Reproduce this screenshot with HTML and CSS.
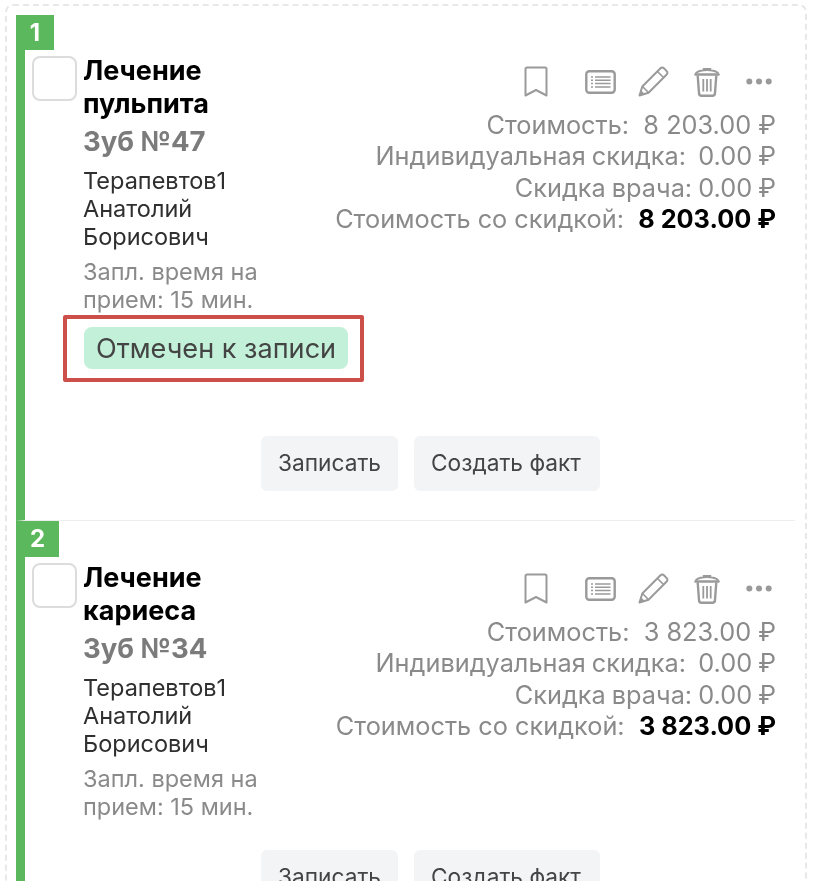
FILE: index.html
```html
<!DOCTYPE html>
<html lang="ru">
<head>
    <meta charset="UTF-8">
    <title>Услуги</title>
    <link rel="stylesheet" href="styles.css">
</head>
<body>
<svg class="sprite" xmlns="http://www.w3.org/2000/svg">
    <symbol id="i-bookmark" viewBox="0 0 24 31">
        <path d="M1.500 3a1.500 1.500 0 0 1 1.500-1.500h18a1.500 1.500 0 0 1 1.500 1.500v26.500l-10.500-5.500-10.500 5.500z" fill="none" stroke="currentColor" stroke-width="2" stroke-linejoin="round"/>
    </symbol>
    <symbol id="i-list" viewBox="0 0 31 24">
        <rect x="1.300" y="1.300" width="28.400" height="21.400" rx="3" fill="none" stroke="currentColor" stroke-width="2.400"/>
        <path d="M10 7h15.500M10 10.300h15.500M10 13.600h15.500M10 17h15.500M6 7h2M6 10.300h2M6 13.600h2M6 17h2" stroke="currentColor" stroke-width="1.500" fill="none"/>
    </symbol>
    <symbol id="i-pencil" viewBox="0 0 31 31">
        <path d="M1.500 29.500l2.800-9L22.500 2.300a2.400 2.400 0 0 1 3.400 0l2.800 2.800a2.400 2.400 0 0 1 0 3.400L10.500 26.700z" fill="none" stroke="currentColor" stroke-width="2" stroke-linejoin="round"/>
        <path d="M19.500 5.500l6 6M4.500 20.500l6 6" fill="none" stroke="currentColor" stroke-width="1.600"/>
        <path d="M1.500 29.500l1.600-5.200 3.600 3.600z" fill="currentColor"/>
    </symbol>
    <symbol id="i-trash" viewBox="0 0 26 30">
        <path d="M1.500 7.500h23" fill="none" stroke="currentColor" stroke-width="2.600" stroke-linecap="round"/>
        <path d="M2 6C5 3.500 9 3 13 3s8 .5 11 3M9.500 2h7" fill="none" stroke="currentColor" stroke-width="1.800" stroke-linecap="round"/>
        <path d="M3.700 8.500l1.300 17.500a2.700 2.700 0 0 0 2.700 2.700h10.600a2.700 2.700 0 0 0 2.700-2.700l1.300-17.500" fill="none" stroke="currentColor" stroke-width="2.400"/>
        <path d="M9.300 12v12.500M13 12v12.500M16.700 12v12.500" fill="none" stroke="currentColor" stroke-width="1.800"/>
    </symbol>
    <symbol id="i-dots" viewBox="0 0 26 7">
        <circle cx="3.300" cy="3.500" r="3" fill="currentColor"/>
        <circle cx="13" cy="3.500" r="3" fill="currentColor"/>
        <circle cx="22.700" cy="3.500" r="3" fill="currentColor"/>
    </symbol>
</svg>

<div class="services">
    <section class="service">
        <div class="num">1</div>
        <div class="service-body">
            <span class="check"></span>
            <div class="info">
                <h3 class="title">Лечение<br>пульпита</h3>
                <div class="tooth">Зуб №47</div>
                <div class="doctor">Терапевтов1<br>Анатолий<br>Борисович</div>
                <div class="duration">Запл. время на<br>прием: 15 мин.</div>
                <div class="status-mark"><span class="status">Отмечен к записи</span></div>
            </div>
            <div class="side">
                <div class="tools">
                    <svg class="ic-bookmark"><use href="#i-bookmark"/></svg>
                    <svg class="ic-list"><use href="#i-list"/></svg>
                    <svg class="ic-pencil"><use href="#i-pencil"/></svg>
                    <svg class="ic-trash"><use href="#i-trash"/></svg>
                    <svg class="ic-dots"><use href="#i-dots"/></svg>
                </div>
                <div class="prices">
                    <div>Стоимость:&nbsp; 8 203.00 ₽</div>
                    <div class="discount">Индивидуальная скидка:&nbsp; 0.00 ₽</div>
                    <div class="discount">Скидка врача: 0.00 ₽</div>
                    <div>Стоимость со скидкой:&nbsp; <b>8 203.00 ₽</b></div>
                </div>
            </div>
        </div>
        <div class="actions">
            <button class="btn">Записать</button>
            <button class="btn">Создать факт</button>
        </div>
    </section>

    <section class="service">
        <div class="num">2</div>
        <div class="service-body">
            <span class="check"></span>
            <div class="info">
                <h3 class="title">Лечение<br>кариеса</h3>
                <div class="tooth">Зуб №34</div>
                <div class="doctor">Терапевтов1<br>Анатолий<br>Борисович</div>
                <div class="duration">Запл. время на<br>прием: 15 мин.</div>
            </div>
            <div class="side">
                <div class="tools">
                    <svg class="ic-bookmark"><use href="#i-bookmark"/></svg>
                    <svg class="ic-list"><use href="#i-list"/></svg>
                    <svg class="ic-pencil"><use href="#i-pencil"/></svg>
                    <svg class="ic-trash"><use href="#i-trash"/></svg>
                    <svg class="ic-dots"><use href="#i-dots"/></svg>
                </div>
                <div class="prices">
                    <div>Стоимость:&nbsp; 3 823.00 ₽</div>
                    <div class="discount">Индивидуальная скидка:&nbsp; 0.00 ₽</div>
                    <div class="discount">Скидка врача: 0.00 ₽</div>
                    <div>Стоимость со скидкой:&nbsp; <b>3 823.00 ₽</b></div>
                </div>
            </div>
        </div>
        <div class="actions actions-second">
            <button class="btn">Записать</button>
            <button class="btn">Создать факт</button>
        </div>
    </section>
</div>
</body>
</html>
```

FILE: styles.css
```css
* {
    margin: 0;
    padding: 0;
    box-sizing: border-box;
}

html, body {
    width: 100%;
    height: 100%;
    overflow: hidden;
    background: white;
}

body {
    font-family: Inter, "Liberation Sans", sans-serif;
    color: #333;
}

.sprite {
    display: none;
}

.services {
    width: 802px;
    height: 877px;
    margin: 4px 0 0 5px;
    padding: 9px 10px 0 9px;
    border: 2px dashed #e8e8e8;
    border-bottom: 0;
    border-radius: 8px 8px 0 0;
    overflow: hidden;
    filter: blur(0.4px);
}

.service {
    border-left: 9px solid #5cb85c;
    height: 505px;
}

.service + .service {
    height: auto;
    border-top: 1px solid #eee;
}

.num {
    width: 38px;
    height: 35px;
    margin-left: -9px;
    background: #5cb85c;
    color: white;
    font-size: 24px;
    font-weight: 700;
    line-height: 35px;
    text-align: center;
}

.service + .service .num {
    width: 43px;
    height: 36px;
}

.service-body {
    display: flex;
    padding: 6px 0 0 7px;
}

.check {
    flex: none;
    width: 45px;
    height: 45px;
    margin-right: 6px;
    border: 2px solid #dcdcdc;
    border-radius: 8px;
}

.info {
    flex: none;
    width: 251px;
}

.title {
    margin-top: -2px;
    font-size: 27px;
    line-height: 33px;
    font-weight: 700;
    color: #000;
}

.tooth {
    margin-top: 5px;
    font-size: 27.500px;
    line-height: 33px;
    font-weight: 700;
    color: #7b7b7b;
}

.doctor {
    margin-top: 9px;
    font-size: 23.500px;
    line-height: 28px;
    color: #2f2f2f;
}

.duration {
    margin-top: 7px;
    font-size: 23.500px;
    line-height: 28px;
    color: #8a8a8a;
}

.status-mark {
    width: 301px;
    height: 67px;
    margin: 1px 0 0 -20px;
    padding: 8px 0 0 17px;
    border: 4px solid #cc4f49;
    border-radius: 2px;
}

.status {
    display: inline-block;
    height: 42px;
    padding: 0 12px;
    background: #c2f0d8;
    border-radius: 8px;
    font-size: 27.100px;
    line-height: 43px;
    color: #444;
}

.side {
    flex: 1;
    padding-right: 19px;
}

.tools {
    display: flex;
    align-items: center;
    justify-content: flex-end;
    height: 31px;
    margin: 10px 0 11px;
    color: #9a9a9a;
}

.tools svg {
    display: block;
}

.ic-bookmark { width: 24px; height: 31px; margin-right: 37px; }
.ic-list { width: 31px; height: 24px; margin-right: 22px; }
.ic-pencil { width: 31px; height: 31px; margin-right: 25px; }
.ic-trash { width: 26px; height: 30px; margin-right: 26px; }
.ic-dots { width: 26px; height: 7px; margin-right: 4px; }

.prices {
    padding-top: 1px;
    font-size: 25.300px;
    line-height: 31.400px;
    text-align: right;
    color: #8a8a8a;
    white-space: nowrap;
}

.prices .discount {
    word-spacing: -1px;
}

.prices b {
    color: #000;
}

.actions {
    display: flex;
    gap: 16px;
    margin: 54px 0 0 236px;
}

.actions-second {
    margin-top: 29px;
}

.btn {
    height: 55px;
    padding: 0 17px 2px;
    border: 0;
    border-radius: 6px;
    background: #f3f4f6;
    font-family: inherit;
    font-size: 22.700px;
    color: #444;
}

.btn + .btn {
    padding-right: 19px;
}
```
